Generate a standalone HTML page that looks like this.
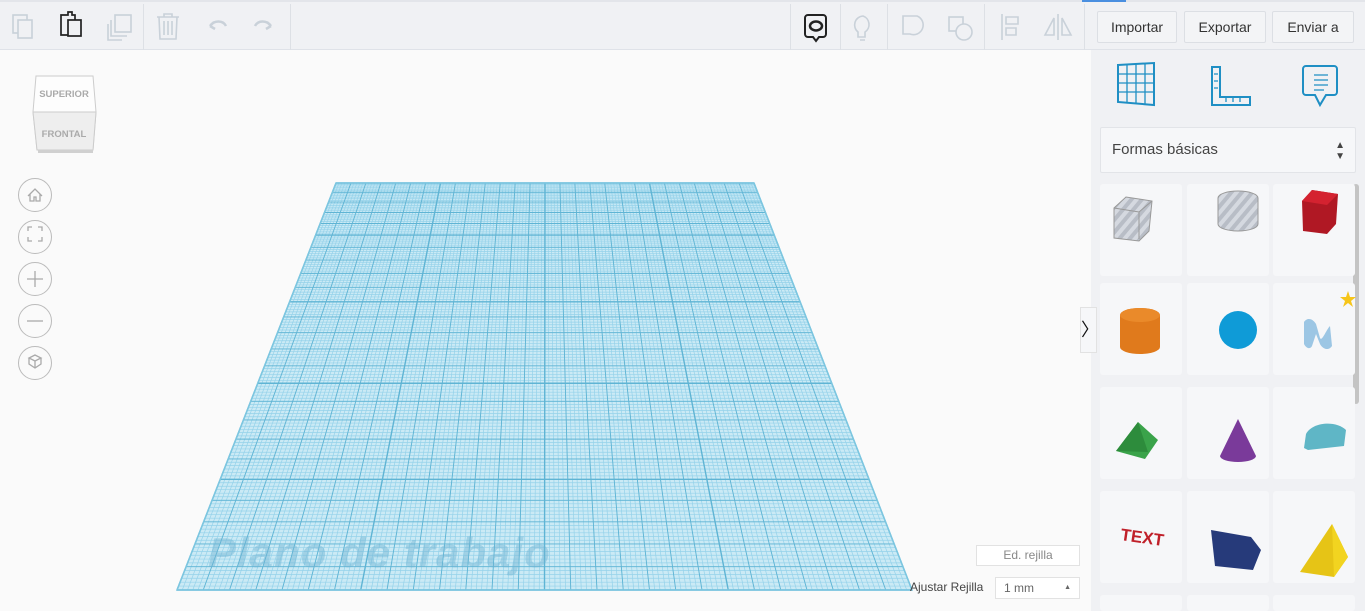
<!DOCTYPE html>
<html style="overflow:hidden;width:1365px;height:611px"><head><meta charset="utf-8"><style>
*{margin:0;padding:0;box-sizing:border-box}
body{width:1365px;height:611px;overflow:hidden;background:#fafafa;font-family:"Liberation Sans",sans-serif;position:relative}
#tb{position:absolute;left:0;top:0;width:1365px;height:50px;background:#f0f1f4;border-bottom:1px solid #dfe2e8;border-top:2px solid #e3e5ea}
.sep{position:absolute;top:2px;width:1px;height:46px;background:#dde0e5}
.ic{position:absolute}
.btn{position:absolute;top:9px;height:32px;border:1px solid #dcdfe4;border-radius:2px;background:#f3f4f6;font-size:14px;color:#333;text-align:center;line-height:30px}
#side{position:absolute;left:1091px;top:50px;width:274px;height:561px;background:#f0f1f4}
.sel{position:absolute;left:1100px;top:127px;width:256px;height:46px;background:#f6f7f9;border:1px solid #e2e4e8;border-radius:2px;font-size:15px;color:#444;line-height:44px;padding-left:11px}
.card{position:absolute;width:82px;height:92px;background:#f6f7f9;border-radius:3px}
.circ{position:absolute;left:18px;width:34px;height:34px;border:1.3px solid #bbb;border-radius:50%;background:#fafafa}
</style></head><body>
<div id="tb">
 <div style="position:absolute;left:1082px;top:-2px;width:44px;height:2px;background:#4a8fe0"></div>
 <svg class="ic" style="left:0;top:0" width="1090" height="48">
  <g fill="none" stroke="#c9d1d9" stroke-width="1.6">
   <rect x="13" y="13" width="14" height="18"/><rect x="18" y="18" width="14" height="18" fill="#f0f1f4"/>
   <rect x="115" y="13" width="16" height="17"/><path d="M111 18v16h16M108 22v16h14"/>
   <path d="M157 15h22M164 15v-3h8v3M159 15l1 22h16l1-22M164 19v14M168 19v14M172 19v14"/>
   <path d="M226 24c-3-6-12-6-16 0M210 24l4-4M210 24l5 3" stroke-width="2.5"/>
   <path d="M255 24c3-6 12-6 16 0M271 24l-4-4M271 24l-5 3" stroke-width="2.5"/>
   <path d="M863 14a9 9 0 0 0-5 16v5h7v-5a9 9 0 0 0-2-16zM860 38h5"/>
   <path d="M903 14h14a9 9 0 1 1-7 18h-7z"/>
   <rect x="949" y="15" width="14" height="14"/><circle cx="964" cy="30" r="8" fill="#f0f1f4"/>
   <path d="M1002 12v26M1006 15h12v7h-12zM1006 26h10v7h-10z"/>
   <path d="M1058 12v26M1054 16l-9 17h9zM1062 16l9 17h-9z"/>
  </g>
  <g fill="none" stroke="#222" stroke-width="1.7">
   <path d="M61 13h7v-3h4v3h3v20h-14z"/><rect x="68" y="18" width="13" height="16" fill="#f0f1f4"/>
   <path d="M808 13h15a3 3 0 0 1 3 3v16a3 3 0 0 1-3 3h-4l-3 4-3-4h-5a3 3 0 0 1-3-3v-16a3 3 0 0 1 3-3z" stroke-width="2"/>
   <ellipse cx="816" cy="24" rx="6" ry="4.5" stroke-width="2.5"/>
  </g>
 </svg>
 <div class="sep" style="left:143px"></div><div class="sep" style="left:290px"></div>
 <div class="sep" style="left:790px"></div><div class="sep" style="left:840px"></div><div class="sep" style="left:887px"></div>
 <div class="sep" style="left:984px"></div><div class="sep" style="left:1084px"></div>
 <div class="btn" style="left:1097px;width:80px">Importar</div>
 <div class="btn" style="left:1184px;width:82px">Exportar</div>
 <div class="btn" style="left:1272px;width:82px">Enviar a</div>
</div>

<svg class="ic" style="left:30px;top:72px" width="70" height="85">
 <path d="M6 4h57l3 36-3 38H7L3 40z" fill="#fdfdfd" stroke="#ccc"/>
 <path d="M3 40h63l-3 38H7z" fill="#eeeeee" stroke="#ccc"/>
 <rect x="8" y="78" width="55" height="3" fill="#d0d0d0"/>
 <text x="34" y="25" font-size="9.5" font-weight="bold" fill="#aaa" text-anchor="middle" font-family="Liberation Sans">SUPERIOR</text>
 <text x="34" y="65" font-size="9.5" font-weight="bold" fill="#aaa" text-anchor="middle" font-family="Liberation Sans">FRONTAL</text>
</svg>
<div class="circ" style="top:178px"></div><div class="circ" style="top:220px"></div><div class="circ" style="top:262px"></div><div class="circ" style="top:304px"></div><div class="circ" style="top:346px"></div>
<svg class="ic" style="left:18px;top:178px" width="34" height="204" fill="none" stroke="#aaa" stroke-width="1.3">
 <path d="M10 18l7-7 7 7M12 16v7h4v-4h2v4h4v-7"/>
 <path d="M10 53v-4h4M20 49h4v4M24 59v4h-4M14 63h-4v-4"/>
 <path d="M17 93v16M9 101h16"/>
 <path d="M9 143h16"/>
 <path d="M17 177l-6 3 6 3 6-3zM11 180v6l6 4 6-4v-6M17 183v7"/>
</svg>

<svg id="g" class="ic" style="left:0;top:0" width="1090" height="611"></svg>
<div style="position:absolute;left:208px;top:529px;font-size:42px;font-weight:bold;font-style:italic;color:rgba(110,180,210,0.45);letter-spacing:1px">Plano de trabajo</div>

<div style="position:absolute;left:976px;top:545px;width:104px;height:21px;border:1px solid #e2e2e2;background:#fff;font-size:12px;color:#888;text-align:center;line-height:19px">Ed. rejilla</div>
<div style="position:absolute;left:910px;top:580px;font-size:12px;color:#444">Ajustar Rejilla</div>
<div style="position:absolute;left:995px;top:577px;width:85px;height:22px;border:1px solid #e2e2e2;background:#fff;font-size:12px;color:#666;line-height:20px;padding-left:8px">1 mm<span style="position:absolute;right:8px;font-size:7px">▲</span></div>

<div id="side"></div>
<div style="position:absolute;left:1080px;top:307px;width:17px;height:46px;background:#f6f7f9;border:1px solid #e2e2e2;font-size:18px;line-height:44px;text-align:center;color:#111">〉</div>
<svg class="ic" style="left:1110px;top:60px" width="240" height="55" fill="none" stroke="#1f8fc4" stroke-width="2">
 <path d="M8 5l36-2v42l-36-3z"/>
 <path d="M17 5v38M26 4v39M35 4v40M8 14h36M8 23h36M8 32h36" stroke-width="1.3"/>
 <path d="M102 7h8v30h30v8h-38z"/>
 <path d="M104 14h4M104 21h4M104 28h4M116 38v4M123 38v4M130 38v4" stroke-width="1.3"/>
 <path d="M196 6h28a3 3 0 0 1 3 3v23a3 3 0 0 1-3 3h-8l-6 10-5-10h-9a3 3 0 0 1-3-3v-23a3 3 0 0 1 3-3z"/>
 <path d="M204 15h14M204 20h14M204 25h14M204 30h10" stroke-width="1.3"/>
</svg>
<div class="sel">Formas básicas<span style="position:absolute;right:10px;top:0;font-size:10px;line-height:11px;padding-top:12px">▲<br>▼</span></div>
<div style="position:absolute;left:1353px;top:184px;width:6px;height:220px;background:#c4c4c4;border-radius:3px"></div>

<div class="card" style="left:1100px;top:184px"></div><div class="card" style="left:1187px;top:184px"></div><div class="card" style="left:1273px;top:184px"></div>
<div class="card" style="left:1100px;top:283px"></div><div class="card" style="left:1187px;top:283px"></div><div class="card" style="left:1273px;top:283px"></div>
<div class="card" style="left:1100px;top:387px"></div><div class="card" style="left:1187px;top:387px"></div><div class="card" style="left:1273px;top:387px"></div>
<div class="card" style="left:1100px;top:491px"></div><div class="card" style="left:1187px;top:491px"></div><div class="card" style="left:1273px;top:491px"></div>
<div class="card" style="left:1100px;top:595px;height:16px"></div><div class="card" style="left:1187px;top:595px;height:16px"></div><div class="card" style="left:1273px;top:595px;height:16px"></div>

<svg class="ic" style="left:1100px;top:184px" width="265" height="400">
 <defs><pattern id="st" width="8" height="8" patternUnits="userSpaceOnUse" patternTransform="rotate(40)"><rect width="8" height="8" fill="#d5d9e0"/><rect width="4" height="8" fill="#b8bdc6"/></pattern></defs>
 <path d="M14 24l12-11 26 4-3 30-10 10-25-3z" fill="url(#st)" stroke="#999"/>
 <path d="M14 24l25 4 13-11M39 28v27" fill="none" stroke="#999"/>
 <path d="M118 14a20 7 0 0 1 40 0v26a20 7 0 0 1-40 0z" fill="url(#st)" stroke="#999"/>
 <path d="M202 17l10-11 26 4-2 30-9 10-24-3z" fill="#b01824"/><path d="M202 17l25 4 11-11-26-4z" fill="#d42230"/>
 <path d="M20 131a20 7 0 0 1 40 0v32a20 7 0 0 1-40 0z" fill="#e07a1c"/><ellipse cx="40" cy="131" rx="20" ry="7" fill="#ea8a2a"/>
 <circle cx="138" cy="146" r="19" fill="#0f9bd7"/>
 <path d="M204 138c4-6 10-2 12 2l4 14c2 4 6-8 10-12l2 20c-4 6-10 2-12-2l-4-10-4 12c-2 4-6 2-8-2z" fill="#9cc6e4"/>
 <path d="M248 107l2 6h6l-5 4 2 6-5-4-5 4 2-6-5-4h6z" fill="#f6c51a"/>
 <path d="M16 267l22-29 20 18-13 19z" fill="#3aa34a"/><path d="M16 267l22-29 10 30z" fill="#2d8c3c"/>
 <path d="M138 235l-18 37a18 6 0 0 0 36 0z" fill="#7a3a9a"/>
 <path d="M204 264l2-14c6-12 30-14 40-4l-2 16-36 4z" fill="#5fb6c6"/>
 <text x="20" y="356" font-size="17" font-weight="bold" fill="#c0202a" font-family="Liberation Sans" transform="rotate(8 20 356)">TEXT</text>
 <path d="M111 346l40 7 10 13-8 20-38-4z" fill="#263a7a"/>
 <path d="M232 340l-32 48 34 5 14-20z" fill="#e6c416"/><path d="M232 340l2 53 14-20z" fill="#f2d420"/>
</svg>

<script>
var g=document.getElementById('g'),s='';
s+='<polygon points="336,183 754,183 912,590 177,590" fill="#cbeaf5"/>';
function yAt(t){return 183+407*(t*(0.55+0.45*t));}
var N=28;
for(var i=0;i<=N*5;i++){var xt=336+i*418/(N*5),xb=177+i*735/(N*5);
 s+='<line x1="'+xt+'" y1="183" x2="'+xb+'" y2="590" stroke="#95d2ea" stroke-width="0.7"/>';}
for(var j=0;j<=150;j++){var t=j/150,y=yAt(t),xl=336-159*(y-183)/407,xr=754+158*(y-183)/407;
 s+='<line x1="'+xl+'" y1="'+y+'" x2="'+xr+'" y2="'+y+'" stroke="#95d2ea" stroke-width="0.7"/>';}
for(var i=0;i<=N;i++){var xt=336+i*418/N,xb=177+i*735/N;
 s+='<line x1="'+xt+'" y1="183" x2="'+xb+'" y2="590" stroke="#5fb4d4" stroke-width="'+(i%7==0?1.4:0.9)+'"/>';}
for(var j=0;j<=25;j++){var t=j/25,y=yAt(t),xl=336-159*(y-183)/407,xr=754+158*(y-183)/407;
 s+='<line x1="'+xl+'" y1="'+y+'" x2="'+xr+'" y2="'+y+'" stroke="#5fb4d4" stroke-width="'+(j%5==0?1.4:0.9)+'"/>';}
s+='<polygon points="336,183 754,183 912,590 177,590" fill="none" stroke="#7cc6e0" stroke-width="1.5"/>';
g.innerHTML=s;
</script>
</body></html>
